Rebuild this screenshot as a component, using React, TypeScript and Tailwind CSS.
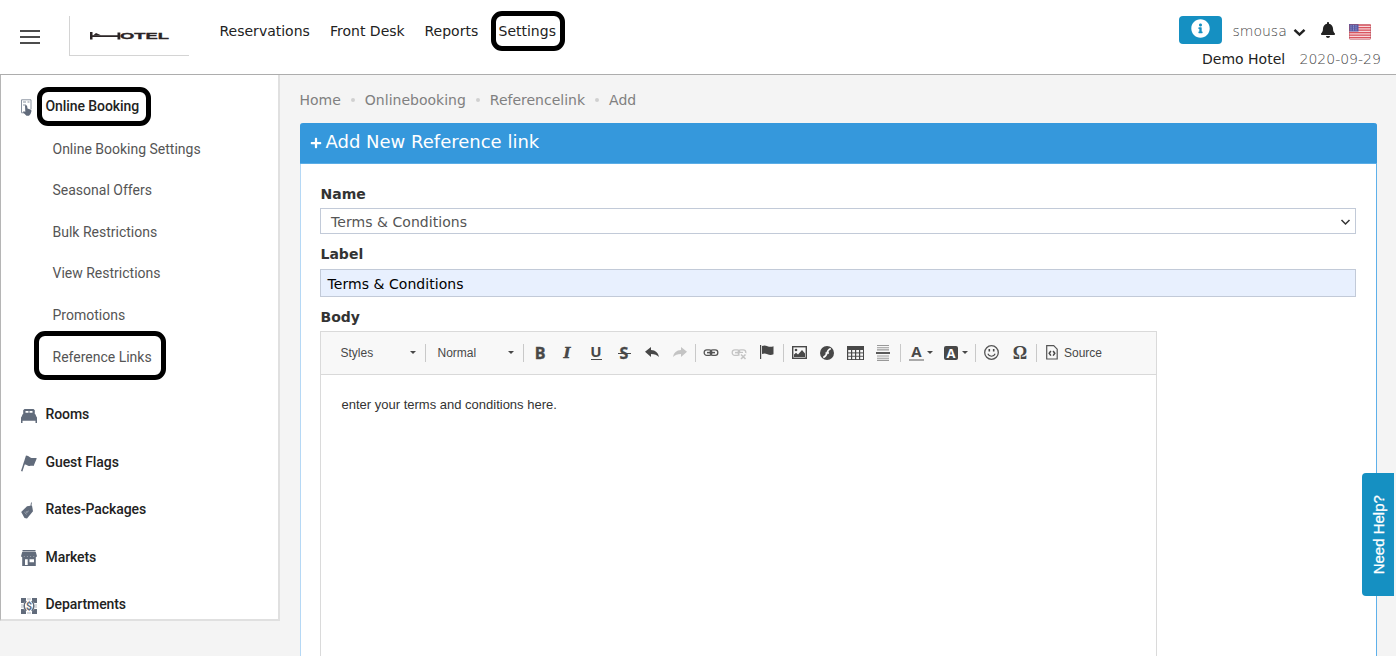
import React from "react";
import { FaBell, FaInfoCircle, FaPlus } from "react-icons/fa";

const SLATE = "#616b7b";

function Ring({ className }: { className: string }) {
  return <span className={"pointer-events-none absolute border-[5px] border-black rounded-[11px] " + className} />;
}

function Logo() {
  return (
    <div className="flex h-[40px] w-[120px] items-center border-b border-l border-[#d4d4d4] bg-white pl-[20px]">
      <svg width="80" height="10" viewBox="0 0 80 10">
        <path d="M0 1h2.500v3.200h25V1.500h2.800v7h-2.800V6h-25v2.600H0z" fill="#2b2526" />
        <path d="M3 4.500 6 2l5 2.200z" fill="#2b2526" />
        <text x="30" y="8.400" fontSize="9" fontWeight="700" textLength="49" lengthAdjust="spacingAndGlyphs" fill="#2b2526" stroke="#2b2526" strokeWidth="0.300" className="font-['Liberation_Sans',sans-serif]">OTEL</text>
      </svg>
    </div>
  );
}

function Flag() {
  return (
    <svg width="22" height="16" viewBox="0 0 22 16">
      <rect width="22" height="16" rx="1.500" fill="#f7d9dc" />
      {[0.5, 3, 5.5, 8, 10.5, 13].map((y) => (
        <rect key={y} y={y} width="22" height="1.300" fill="#d9545f" />
      ))}
      <rect width="9.500" height="7.500" fill="#5a5ba5" />
      <g fill="#b9bade">
        {[1.5, 3.5, 5.5].map((y) => [1.5, 4, 6.5].map((x) => <rect key={x + "-" + y} x={x} y={y} width="1" height="0.800" />))}
      </g>
      <rect x="0.500" y="0.500" width="21" height="15" rx="1.200" fill="none" stroke="#b44a58" strokeOpacity="0.400" />
    </svg>
  );
}

function Header() {
  return (
    <header className="flex h-[75px] shrink-0 items-start border-b border-[#adadad] bg-white">
      <div className="mt-[30px] ml-[20px] flex w-[20px] flex-col gap-[4px]">
        <span className="h-[2px] bg-[#4c4c4c]" />
        <span className="h-[2px] bg-[#4c4c4c]" />
        <span className="h-[2px] bg-[#4c4c4c]" />
      </div>
      <div className="mt-[16px] ml-[29px]">
        <Logo />
      </div>
      <nav className="mt-[20px] ml-[30.5px] flex text-[14px] leading-[22px] whitespace-nowrap text-[#222]">
        <a className="w-[110.500px]">Reservations</a>
        <a className="w-[94.500px]">Front Desk</a>
        <a className="w-[74px]">Reports</a>
        <a className="relative">
          Settings
          <Ring className="-top-[9px] -left-[8px] h-[40px] w-[74px]" />
        </a>
      </nav>
      <div className="mt-[15px] mr-[15px] ml-auto flex w-[202px] flex-col">
        <div className="flex h-[30px] items-center">
          <span className="flex h-[28px] w-[43px] items-center justify-center rounded-[4px] bg-[#1590c2] text-white">
            <FaInfoCircle size={19} className="-mt-[3px]" />
          </span>
          <span className="ml-[10.500px] w-[60.500px] pt-[2px] text-[14px] font-extralight text-[#444]">smousa</span>
          <svg width="13" height="9" viewBox="0 0 13 9" className="mt-[4px]"><path d="M1.500 1.800 6.500 6.600l5-4.800" fill="none" stroke="#222" strokeWidth="2.500" /></svg>
          <FaBell size={16} className="ml-[14px] text-[#222]" />
          <span className="mt-[3px] ml-[13px]"><Flag /></span>
        </div>
        <div className="flex justify-end text-[14px] leading-[28px] whitespace-nowrap text-[#222]">
          <span className="w-[97.500px]">Demo Hotel</span>
          <span className="w-[81.500px] font-extralight text-[#444]">2020-09-29</span>
        </div>
      </div>
    </header>
  );
}

function BookingIcon() {
  return (
    <svg width="11" height="17" viewBox="0 0 11 17">
      <path d="M.5 .8h9.500v9.500M.5 .8v13h3" fill="none" stroke="#8a93a0" />
      <path d="M2 3h3M6.500 3h2M2 6h3" stroke="#8a93a0" strokeWidth="1.200" />
      <path d="M4 6.500c1.200-.6 2 0 2.200 1l.3 2 2.800.9c1.100.3 1.300 1 1.100 2l-.9 2.700-1.500 1.700H5.500L2 13.200l.6-1 1.700.5z" fill={SLATE} />
    </svg>
  );
}

function BedIcon() {
  return (
    <svg width="16" height="14" viewBox="0 0 16 14" fill={SLATE}>
      <path d="M3.500 0h9l1.300 1.200v4H2.200v-4zM4.500 2v1.700h3V2zm4 0v1.700h3V2z" fillRule="evenodd" />
      <path d="M1.800 5h12.400l1.500 3.200H.3zM0 8.200h16V14h-1.500v-2.200h-13V14H0z" />
    </svg>
  );
}

function GuestFlagIcon() {
  return (
    <svg width="16" height="17" viewBox="0 0 16 17" fill={SLATE}>
      <path d="M5 .5 6.500 1 1.400 16.500 0 16z" />
      <path d="M5.800.8c2 .2 2.900 1.700 4.700 2.100 1.700.4 3-.3 5.300.3L12.600 11c-2.300-.6-3.700.4-5.500-.3-1.500-.6-2.200-1.500-4.100-1.500z" />
    </svg>
  );
}

function TagIcon() {
  return (
    <svg width="13" height="17" viewBox="0 0 13 17">
      <path d="M.2 10 6 4.200l5-.6 1 5.600-6 7.200-2.500-.5z" fill={SLATE} />
      <path d="M9.500 6 10.500.5" stroke={SLATE} strokeWidth=".9" />
      <path d="m3.500 10.300 2.200 2M5.200 9.300l1 1.800M7.300 8.700l-.8 1.500" stroke="#b4bac3" strokeWidth=".8" />
    </svg>
  );
}

function ShopIcon() {
  return (
    <svg width="16" height="16" viewBox="0 0 16 16" fill={SLATE}>
      <path d="M1.500 0h13v1.600h-13zM1.200 2h13.600L16 6.300c-.8 1.300-2.300 1.300-3.200.3-1 1-2.300 1-3.200 0-1 1-2.300 1-3.200 0-1 1-2.300 1-3.200 0-1 1-2.400 1-3.200-.3z" />
      <path d="M1.200 7h13.600v9H1.200zM4 9.200V15h2.700V9.200zM8.500 9.200v3H13v-3z" fillRule="evenodd" />
    </svg>
  );
}

function DeptIcon() {
  return (
    <svg width="16" height="16" viewBox="0 0 16 16" fill={SLATE}>
      <path d="M0 0h5v2.500L2.500 5H0zM11 0h5v5h-2.500L11 2.500zM0 11h2.500L5 13.500V16H0zM13.500 11H16v5h-5v-2.500z" />
      <path d="M6 1h4M6 15h4M1 6v4M15 6v4" stroke={SLATE} strokeWidth="1" strokeOpacity=".5" />
      <path d="M5.200 3C2.500 5.700 2.500 10.300 5.200 13M10.800 3c2.700 2.700 2.700 7.300 0 10" fill="none" stroke={SLATE} strokeWidth="1.600" />
      <text x="8" y="11.800" textAnchor="middle" fontSize="10.500" fontWeight="700" className="font-[Roboto,sans-serif]">$</text>
    </svg>
  );
}

const SUBS = ["Online Booking Settings", "Seasonal Offers", "Bulk Restrictions", "View Restrictions", "Promotions", "Reference Links"];
const GROUPS: [string, React.ReactNode][] = [
  ["Rooms", <BedIcon />],
  ["Guest Flags", <GuestFlagIcon />],
  ["Rates-Packages", <TagIcon />],
  ["Markets", <ShopIcon />],
  ["Departments", <DeptIcon />],
];

function Sidebar() {
  return (
    <aside className="h-[546px] w-[280px] shrink-0 overflow-hidden border-r-2 border-b-2 border-l border-[#e0e0e0] border-l-[#b5b5b5] bg-white pt-[11px] pl-[20px] font-[Roboto,sans-serif] text-[14px] whitespace-nowrap">
      <div className="flex h-[42px] items-center font-medium tracking-[-0.08px] text-[#222]">
        <span className="w-[24.500px]"><BookingIcon /></span>
        <span className="relative -mt-px">
          Online Booking
          <Ring className="-top-[9px] -left-[8.500px] h-[39px] w-[114px]" />
        </span>
      </div>
      {SUBS.map((s) => (
        <div key={s} className="flex h-[41.600px] items-center pt-[0.500px] pl-[31.500px] text-[#555]">
          <span className="relative">
            {s}
            {s === "Reference Links" && <Ring className="-top-[15.500px] -left-[19px] h-[48.500px] w-[132px]" />}
          </span>
        </div>
      ))}
      <div className="mt-[13px]">
        {GROUPS.map(([label, icon]) => (
          <div key={label} className="flex h-[47.600px] items-center pt-[0.500px] font-medium tracking-[-0.08px] text-[#222]">
            <span className="w-[24.500px] pt-[2px]">{icon}</span>
            {label}
          </div>
        ))}
      </div>
    </aside>
  );
}

function Cell({ children }: { children: React.ReactNode }) {
  return <span className="flex h-[20px] w-[28px] shrink-0 items-center justify-center">{children}</span>;
}

function Sep({ className = "" }: { className?: string }) {
  return <span className={"h-[18px] w-px shrink-0 bg-[#c9c9c9] " + className} />;
}

function Caret({ className = "" }: { className?: string }) {
  return <svg width="6" height="3" viewBox="0 0 6 3" className={"shrink-0 " + className}><path d="M0 0h6L3 3z" fill="#484848" /></svg>;
}

function Arrow({ color, flip }: { color: string; flip?: boolean }) {
  return (
    <svg width="14" height="11" viewBox="0 0 14 11" className={flip ? "-scale-x-100" : ""}>
      <path d="M0 4.800 6 0v2.900c4.500.2 7.200 2.600 8 7.100-2-2.300-4.300-3.100-8-3.100v3z" fill={color} />
    </svg>
  );
}

function LinkShape({ color, broken }: { color: string; broken?: boolean }) {
  return (
    <svg width="16" height="14" viewBox="0 0 16 14">
      <g fill="none" stroke={color} strokeWidth="1.300">
        <rect x="1.200" y="3.800" width="7.600" height="5.600" rx="2.600" />
        <rect x="7.200" y="3.800" width="7.600" height="5.600" rx="2.600" />
        <path d="M4 6.600h8" strokeWidth="1.500" />
      </g>
      {broken && (
        <>
          <rect x="8.500" y="7" width="7" height="7" fill="#f8f8f8" />
          <path d="m10 8.500 4.500 4.500M14.500 8.500 10 13" stroke={color} strokeWidth="1.600" />
        </>
      )}
    </svg>
  );
}

function Toolbar() {
  return (
    <div className="flex h-[43px] items-center border-b border-[#d9d9d9] bg-[#f8f8f8] pb-px font-['Liberation_Sans',sans-serif] text-[12px] text-[#484848]">
      <span className="ml-[19.500px] w-[69.500px]">Styles</span>
      <Caret />
      <Sep className="ml-[9px]" />
      <span className="ml-[11.500px] w-[70.500px]">Normal</span>
      <Caret />
      <Sep className="ml-[9px]" />
      <div className="ml-[2px] flex font-['Open_Sans',sans-serif] text-[16px] leading-[20px] font-bold">
        <Cell><span className="[-webkit-text-stroke:0.400px_#484848]">B</span></Cell>
        <Cell><span className="pr-[2px] font-['DejaVu_Serif',serif] text-[15px] font-bold italic [-webkit-text-stroke:0.300px_#484848]">I</span></Cell>
        <Cell><span className="flex h-[15px] w-[11px] justify-center border-b border-[#484848] text-[15px] leading-[13px]">U</span></Cell>
        <Cell>
          <span className="relative text-[16px] [-webkit-text-stroke:0.300px_#484848]">
            S
            <span className="absolute top-[10px] -left-[2px] h-px w-[13px] bg-[#484848]" />
          </span>
        </Cell>
        <Cell><Arrow color="#484848" /></Cell>
        <Cell><Arrow color="#c4c4c4" flip /></Cell>
      </div>
      <Sep className="ml-px" />
      <div className="ml-px flex">
        <Cell><LinkShape color="#555" /></Cell>
        <Cell><LinkShape color="#c4c4c4" broken /></Cell>
        <Cell><svg width="14" height="15" viewBox="0 0 14 15" fill="#484848"><path d="M0 0h1.200v14H0zM2 1c2-.9 3.500-.8 5.500.2 2 .9 4 .8 6 0v8c-2 .9-4 .9-6 0-2-.9-3.500-1-5.500-.2z" /></svg></Cell>
      </div>
      <Sep className="ml-[2px]" />
      <div className="ml-px flex">
        <Cell><svg width="15" height="13" viewBox="0 0 15 13"><rect x=".7" y=".7" width="13.600" height="11.600" fill="none" stroke="#484848" strokeWidth="1.400" /><circle cx="4" cy="4" r="1.300" fill="#484848" /><path d="M2 11V8.500l2-1.700 2 1.700L10 4l3 3.500V11z" fill="#484848" /></svg></Cell>
        <Cell><svg width="14" height="14" viewBox="0 0 14 14"><circle cx="7" cy="7" r="7" fill="#484848" /><path d="M10.800 2.800C8.500 2.600 7.900 4.500 7 7c-.8 2.400-1.600 4-3.800 4.300M5.500 7H9" fill="none" stroke="#f8f8f8" strokeWidth="1.700" /></svg></Cell>
        <Cell><svg width="17" height="14" viewBox="0 0 17 14"><path d="M0 0h17v14H0z" fill="#484848" /><g fill="#f8f8f8">{[1.2, 5.2, 9.2, 13.2].map((x) => [4, 7.4, 10.7].map((y) => <rect key={x + "-" + y} x={x} y={y} width="2.800" height="2.400" />))}</g></svg></Cell>
        <Cell><svg width="14" height="16" viewBox="0 0 14 16"><path d="M1 .5h12M1 2.700h12M1 4.900h12M1 11h12M1 13.200h12M1 15.400h12" stroke="#999" strokeWidth="1.100" /><path d="M0 8h14" stroke="#484848" strokeWidth="1.800" /></svg></Cell>
      </div>
      <Sep className="ml-[3px]" />
      <span className="ml-[8px] flex h-[17px] w-[15px] justify-center border-b-2 border-[#aaa] font-['Open_Sans',sans-serif] text-[15px] leading-[15px] font-bold">A</span>
      <Caret className="ml-[3px]" />
      <span className="ml-[11px] flex h-[14px] w-[14px] items-center justify-center rounded-[2px] bg-[#484848] font-['Open_Sans',sans-serif] text-[13px] leading-[14px] font-bold text-white">A</span>
      <Caret className="ml-[4px]" />
      <Sep className="ml-[7px]" />
      <Cell><svg width="15" height="15" viewBox="0 0 15 15" className="ml-[3px]"><circle cx="7.500" cy="7.500" r="6.800" fill="none" stroke="#555" strokeWidth="1.300" /><path d="M5.300 4v2.500M9.700 4v2.500" stroke="#484848" strokeWidth="1.600" /><path d="M3.800 8.800c1.300 3.200 6.100 3.200 7.400 0" fill="none" stroke="#484848" strokeWidth="1.100" /></svg></Cell>
      <span className="ml-[8px] w-[16px] pt-px text-center font-['Liberation_Serif',serif] text-[18px] leading-[19px] font-bold">Ω</span>
      <Sep className="ml-[8px]" />
      <svg width="12" height="15" viewBox="0 0 12 15" className="ml-[9px]"><path d="M.7.7h7l3.500 3.500v9.800H.7z" fill="none" stroke="#555" strokeWidth="1.200" /><path d="M4.900 6 3.200 8.300l1.700 2.300M7.100 6l1.700 2.300-1.700 2.300" fill="none" stroke="#484848" strokeWidth="1.500" /></svg>
      <span className="ml-[6px] pt-px">Source</span>
    </div>
  );
}

function Main() {
  const label = "text-[14px] font-bold leading-[20px] text-[#333] pl-[0.5px]";
  return (
    <main className="flex min-w-0 flex-1 flex-col pr-[19px] pl-[20px]">
      <div className="-ml-[0.500px] flex h-[48px] items-center text-[14px] text-[#808080]">
        {["Home", "Onlinebooking", "Referencelink", "Add"].map((t, i) => (
          <React.Fragment key={t}>
            {i > 0 && <span className="mx-[10px] mt-[2px] size-[4px] rounded-full bg-[#d0d0d0]" />}
            <span className="pt-[2px]">{t}</span>
          </React.Fragment>
        ))}
      </div>
      <section className="flex flex-1 flex-col rounded-t-[3px] border-x border-[#5eb0ea] border-l-[#b5d8f5] bg-white">
        <div className="-mx-px flex h-[41px] shrink-0 items-center rounded-t-[3px] border-b border-[#5aade6] bg-[#3598dc] pb-[3px] pl-[10px] text-[18px] text-white">
          <FaPlus size={12} className="mt-[3px] mr-[3.500px]" />
          Add New Reference link
        </div>
        <div className="flex flex-1 flex-col pt-[20px] pr-[20px] pl-[19px]">
          <div className={label}>Name</div>
          <div className="mt-[4px] flex h-[26px] shrink-0 items-center justify-between border border-[#c2cad8] pt-[2px] pr-[4px] pl-[10px] text-[14px] tracking-[0.05px] text-[#555]">
            Terms &amp; Conditions
            <svg width="11" height="7" viewBox="0 0 11 7"><path d="m1.500 1 4 4 4-4" fill="none" stroke="#333" strokeWidth="1.500" /></svg>
          </div>
          <div className={label + " mt-[10px]"}>Label</div>
          <div className="mt-[5px] flex h-[28px] shrink-0 items-center border border-[#c2cad8] bg-[#e8f0fe] px-[6.500px] pt-[2px] text-[14px] tracking-[0.05px] text-black">Terms &amp; Conditions</div>
          <div className={label + " mt-[10px]"}>Body</div>
          <div className="mt-[4px] w-[837px] flex-1 border border-b-0 border-[#dadada]">
            <Toolbar />
            <p className="pt-[20px] pl-[20.500px] font-['Liberation_Sans',sans-serif] text-[13px] leading-[20px] text-[#333]">enter your terms and conditions here.</p>
          </div>
        </div>
      </section>
    </main>
  );
}

export default function App() {
  return (
    <div className="relative flex h-[656px] w-[1396px] flex-col overflow-hidden bg-[#f4f4f4] font-['DejaVu_Sans',sans-serif]">
      <Header />
      <div className="flex min-h-0 flex-1">
        <Sidebar />
        <Main />
      </div>
      <button className="absolute top-[473px] right-[2px] flex h-[123px] w-[32px] items-center justify-center rounded-l-[4px] bg-[#1590c2] text-white">
        <span className="-rotate-90 pt-[3px] font-['Liberation_Sans',sans-serif] text-[15px] whitespace-nowrap [-webkit-text-stroke:0.300px_white]">Need Help?</span>
      </button>
    </div>
  );
}
